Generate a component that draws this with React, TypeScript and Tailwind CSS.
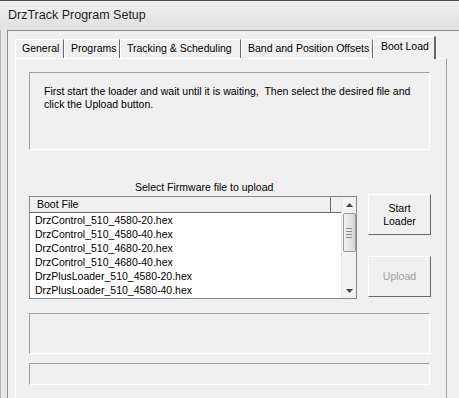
import React from 'react'

const tabs = [
  { label: 'General', w: 49 },
  { label: 'Programs', w: 56 },
  { label: 'Tracking & Scheduling', w: 121 },
  { label: 'Band and Position Offsets', w: 132 },
]

const files = [
  'DrzControl_510_4580-20.hex',
  'DrzControl_510_4580-40.hex',
  'DrzControl_510_4680-20.hex',
  'DrzControl_510_4680-40.hex',
  'DrzPlusLoader_510_4580-20.hex',
  'DrzPlusLoader_510_4580-40.hex',
]

function Button({ children, disabled }: { children: React.ReactNode; disabled?: boolean }) {
  return (
    <div
      className={
        'w-[63px] h-[41px] flex items-center justify-center text-center leading-[13px] bg-[#f0f0f0] border border-t-white border-l-white border-b-[#696969] border-r-[#696969] ' +
        (disabled ? 'text-[#a0a0a0]' : 'text-black')
      }
    >
      {children}
    </div>
  )
}

export default function App() {
  return (
    <div
      className="w-[459px] h-[398px] overflow-hidden bg-[#f0f0f0] text-[10.5px] text-black"
      style={{ fontFamily: '"Liberation Sans", Arial, sans-serif' }}
    >
      {/* title bar */}
      <div className="h-[30px] border-t border-[#4a4a4a] bg-gradient-to-b from-[#f0f0f0] to-[#e0e0e0] flex items-center pl-[8px]">
        <span className="text-[12.5px] text-[#1e1e1e] -mt-[1px]">DrzTrack Program Setup</span>
      </div>

      <div className="flex h-[368px]">
        {/* window frame */}
        <div className="w-[8px] bg-[#e6e6e6] border-l border-l-[#b4b4b4] border-r border-r-[#8f8f8f]" />

        {/* client */}
        <div className="flex-1 border-t border-[#8f8f8f] pl-[7px] pt-[5px]">
          {/* tab strip */}
          <div className="flex items-end h-[22px]">
            {tabs.map(t => (
              <div
                key={t.label}
                className="h-[19px] flex items-center pl-[6px] bg-[#f0f0f0] border-t border-l border-t-white border-l-white border-r border-r-[#696969] whitespace-nowrap"
                style={{ width: t.w }}
              >
                {t.label}
              </div>
            ))}
            <div className="w-[63px] h-[23px] -mb-[1px] flex items-center pl-[7px] pb-[2px] bg-[#f0f0f0] border-t border-l border-t-white border-l-white border-r-2 border-r-[#696969] whitespace-nowrap">
              Boot Load
            </div>
          </div>

          {/* panel */}
          <div className="w-[432px] h-[350px] border-t border-l border-white border-r border-r-[#a0a0a0] pl-[13px] pt-[13px]">
            <div className="w-[401px] h-[78px] border border-t-[#a0a0a0] border-l-[#a0a0a0] border-b-white border-r-white pl-[14px] pt-[12px] leading-[13px]">
              First start the loader and wait until it is waiting,&nbsp; Then select the desired file and
              <br />
              click the Upload button.
            </div>

            <div className="mt-[31px] h-[12px] leading-[12px] pl-[106px]">Select Firmware file to upload</div>

            <div className="flex mt-[1px]">
              <div className="mt-[2px] w-[328px] h-[103px] border border-[#828790] bg-white flex">
                <div className="flex-1 flex flex-col">
                  <div className="h-[16px] flex bg-[#f0f0f0] border-b border-[#696969]">
                    <div className="w-[301px] border-r border-[#696969] pl-[7px] leading-[15px]">Boot File</div>
                    <div className="flex-1" />
                  </div>
                  {files.map(f => (
                    <div key={f} className="h-[14px] leading-[14px] pl-[5px] whitespace-nowrap">
                      {f}
                    </div>
                  ))}
                </div>
                {/* scrollbar */}
                <div className="w-[15px] bg-[#f3f3f3] border-l border-[#e6e6e6] flex flex-col items-center">
                  <div className="h-[15px] flex items-center justify-center">
                    <svg width="7" height="4" viewBox="0 0 7 4">
                      <path d="M3.5 0 L7 4 L0 4 Z" fill="#444" />
                    </svg>
                  </div>
                  <div className="mt-[1px] w-[13px] h-[39px] rounded-[2px] border border-[#9a9a9a] bg-gradient-to-r from-[#f2f2f2] to-[#d8d8d8] flex flex-col items-center justify-center gap-[2px]">
                    <div className="w-[6px] h-[1px] bg-[#8a8a8a]" />
                    <div className="w-[6px] h-[1px] bg-[#8a8a8a]" />
                    <div className="w-[6px] h-[1px] bg-[#8a8a8a]" />
                    <div className="w-[6px] h-[1px] bg-[#8a8a8a]" />
                  </div>
                  <div className="flex-1" />
                  <div className="h-[15px] flex items-center justify-center">
                    <svg width="7" height="4" viewBox="0 0 7 4">
                      <path d="M0 0 L7 0 L3.5 4 Z" fill="#444" />
                    </svg>
                  </div>
                </div>
              </div>

              <div className="ml-[11px] flex flex-col gap-[21px]">
                <Button>
                  Start
                  <br />
                  Loader
                </Button>
                <Button disabled>Upload</Button>
              </div>
            </div>

            <div className="mt-[14px] w-[401px] h-[41px] border border-t-[#a0a0a0] border-l-[#a0a0a0] border-b-white border-r-white" />
            <div className="mt-[9px] w-[401px] h-[22px] border border-t-[#a0a0a0] border-l-[#a0a0a0] border-b-white border-r-white" />
          </div>
        </div>
      </div>
    </div>
  )
}
